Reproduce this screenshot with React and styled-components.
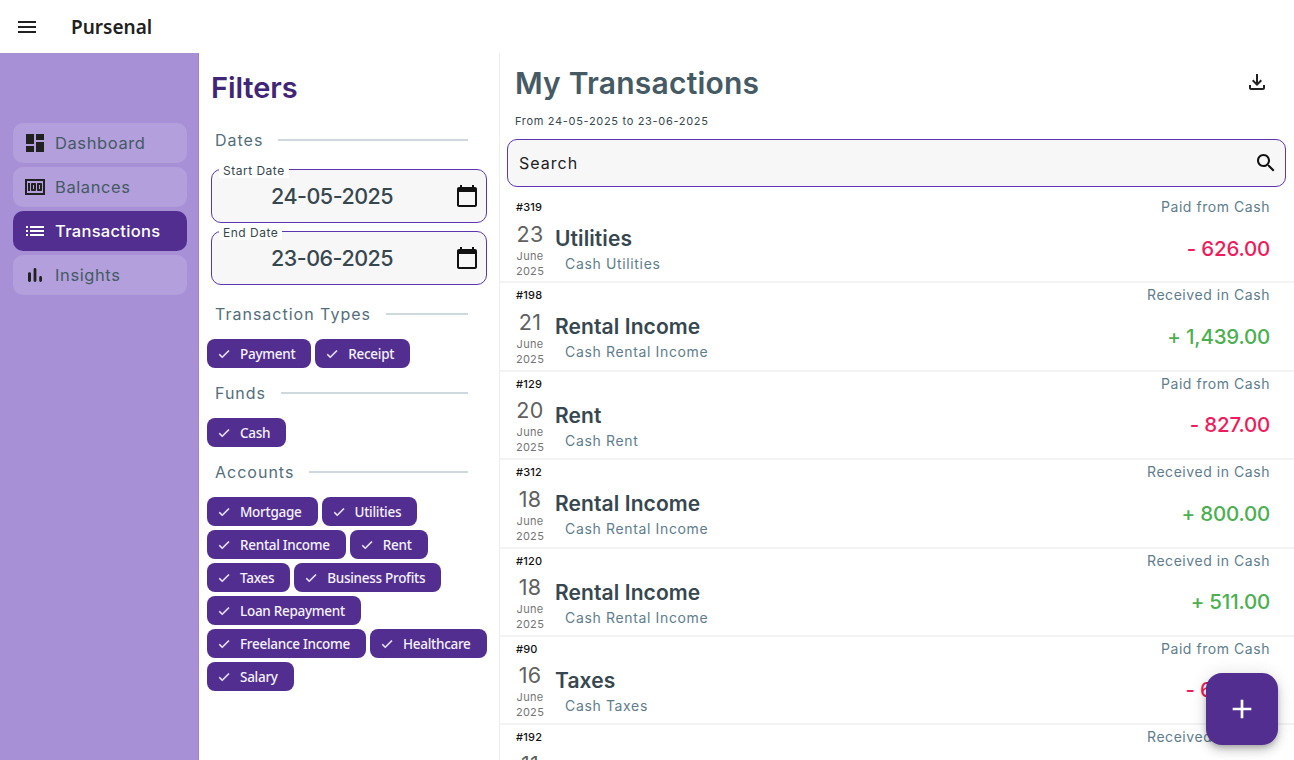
import React from "react";
import styled, { createGlobalStyle } from "styled-components";

const PURPLE = "#522e90";
const HEADING_FONT = `Inter, "Liberation Sans", sans-serif`;
const CHIP_FONT = `"Noto Sans", "Open Sans", sans-serif`;

const ICONS = {
  menu: "M3 18h18v-2H3zm0-5h18v-2H3zm0-7v2h18V6z",
  dashboard: "M3 13h8V3H3zm0 8h8v-6H3zm10 0h8V11h-8zm0-18v6h8V3z",
  money:
    "M5 8h2v8H5zm7 0H9c-.55 0-1 .45-1 1v6c0 .55.45 1 1 1h3c.55 0 1-.45 1-1V9c0-.55-.45-1-1-1m-1 6h-1v-4h1zm7-6h-3c-.55 0-1 .45-1 1v6c0 .55.45 1 1 1h3c.55 0 1-.45 1-1V9c0-.55-.45-1-1-1m-1 6h-1v-4h1zM2 4v16h20V4zm2 14V6h16v12z",
  list: "M3 13h2v-2H3zm0 4h2v-2H3zm0-8h2V7H3zm4 4h14v-2H7zm0 4h14v-2H7zM7 7v2h14V7z",
  bars: "M6.4 9.2h.2c.77 0 1.4.63 1.4 1.4v7c0 .77-.63 1.4-1.4 1.4h-.2c-.77 0-1.4-.63-1.4-1.4v-7c0-.77.63-1.4 1.4-1.4M12 5c.77 0 1.4.63 1.4 1.4v11.2c0 .77-.63 1.4-1.4 1.4s-1.4-.63-1.4-1.4V6.4c0-.77.63-1.4 1.4-1.4m5.6 8c.77 0 1.4.63 1.4 1.4v3.2c0 .77-.63 1.4-1.4 1.4s-1.4-.63-1.4-1.4v-3.2c0-.77.63-1.4 1.4-1.4",
  calendar:
    "M20 3h-1V1h-2v2H7V1H5v2H4c-1.1 0-2 .9-2 2v16c0 1.1.9 2 2 2h16c1.1 0 2-.9 2-2V5c0-1.1-.9-2-2-2m0 18H4V8h16z",
  search:
    "M15.5 14h-.79l-.28-.27C15.41 12.59 16 11.11 16 9.5 16 5.91 13.09 3 9.5 3S3 5.91 3 9.5 5.91 16 9.5 16c1.61 0 3.09-.59 4.23-1.57l.27.28v.79l5 4.99L20.49 19zm-6 0C7.01 14 5 11.99 5 9.5S7.01 5 9.5 5 14 7.01 14 9.5 11.99 14 9.5 14",
  download:
    "M18 15v3H6v-3H4v3c0 1.1.9 2 2 2h12c1.1 0 2-.9 2-2v-3zm-1-4-1.41-1.41L13 12.17V4h-2v8.17L8.41 9.59 7 11l5 5z",
  check: "M9 16.17 4.83 12l-1.42 1.41L9 19 21 7l-1.41-1.41z",
  add: "M19 13h-6v6h-2v-6H5v-2h6V5h2v6h6z",
};

const NAV_ITEMS = [
  { label: "Dashboard", icon: "dashboard" },
  { label: "Balances", icon: "money" },
  { label: "Transactions", icon: "list", active: true },
  { label: "Insights", icon: "bars" },
];

const ACCOUNTS = [
  "Mortgage",
  "Utilities",
  "Rental Income",
  "Rent",
  "Taxes",
  "Business Profits",
  "Loan Repayment",
  "Freelance Income",
  "Healthcare",
  "Salary",
];

const TRANSACTIONS = [
  { id: 319, day: 23, title: "Utilities", sub: "Cash Utilities", note: "Paid from Cash", amount: "- 626.00" },
  { id: 198, day: 21, title: "Rental Income", sub: "Cash Rental Income", note: "Received in Cash", amount: "+ 1,439.00", income: true },
  { id: 129, day: 20, title: "Rent", sub: "Cash Rent", note: "Paid from Cash", amount: "- 827.00" },
  { id: 312, day: 18, title: "Rental Income", sub: "Cash Rental Income", note: "Received in Cash", amount: "+ 800.00", income: true },
  { id: 120, day: 18, title: "Rental Income", sub: "Cash Rental Income", note: "Received in Cash", amount: "+ 511.00", income: true },
  { id: 90, day: 16, title: "Taxes", sub: "Cash Taxes", note: "Paid from Cash", amount: "- 640.00" },
  { id: 192, day: 11, title: "Rental Income", sub: "Cash Rental Income", note: "Received in Cash", amount: "+ 950.00", income: true },
];

const GlobalStyle = createGlobalStyle`
  html, body {
    margin: 0;
    height: 100%;
    overflow: hidden;
    background: #fff;
    font-family: ${HEADING_FONT};
  }
  #root { height: 100%; }
  * { box-sizing: border-box; }
`;

const Icon = ({ name, size = 24, color = "currentColor", stroke }) => (
  <svg
    width={size}
    height={size}
    viewBox="0 0 24 24"
    fill={color}
    stroke={stroke ? color : "none"}
    strokeWidth={stroke}
    style={{ flexShrink: 0, display: "block" }}
  >
    <path d={ICONS[name]} />
  </svg>
);

const Page = styled.div`
  height: 760px;
  display: flex;
  flex-direction: column;
  position: relative;
  overflow: hidden;
`;

const Header = styled.header`
  height: 53px;
  flex-shrink: 0;
  display: flex;
  align-items: center;
  padding-left: 15px;
  color: #212121;
`;

const Brand = styled.div`
  margin-left: 32px;
  font-family: ${CHIP_FONT};
  font-size: 19px;
  font-weight: 600;
`;

const Body = styled.div`
  flex: 1;
  display: flex;
  min-height: 0;
`;

const Sidebar = styled.nav`
  width: 199px;
  flex-shrink: 0;
  background: #a890d6;
  border-right: 1px solid #9a82c9;
  padding: 70px 11px 0 13px;
  display: flex;
  flex-direction: column;
  gap: 4px;
`;

const NavItem = styled.div`
  height: 40px;
  border-radius: 10px;
  display: flex;
  align-items: center;
  gap: 8px;
  padding-left: 10px;
  font-size: 16.5px;
  letter-spacing: ${(p) => (p.$active ? "0.3px" : "0.6px")};
  font-weight: ${(p) => (p.$active ? 500 : 400)};
  background: ${(p) => (p.$active ? PURPLE : "#b29fdb")};
  color: ${(p) => (p.$active ? "#fff" : "#455a64")};
`;

const NavIcon = styled.span`
  color: ${(p) => (p.$active ? "#fff" : "#212121")};
  display: block;
`;

const FilterColumn = styled.aside`
  width: 301px;
  flex-shrink: 0;
  border-right: 1px solid #eeeeee;
  padding: 15px 11px 0 8px;
`;

const FilterTitle = styled.h2`
  margin: 0 0 0 4px;
  height: 40px;
  line-height: 40px;
  font-size: 29px;
  font-weight: 600;
  letter-spacing: -0.1px;
  color: #412576;
`;

const SectionHead = styled.div`
  display: flex;
  align-items: center;
  gap: 15px;
  height: 24px;
  margin: ${(p) => p.$margin};
  padding: 0 20px 0 8px;
  font-size: 16px;
  letter-spacing: 1px;
  color: #546e7a;
  white-space: nowrap;

  &::after {
    content: "";
    flex: 1;
    height: 2px;
    background: #cfd8dc;
  }
`;

const DateField = styled.div`
  position: relative;
  margin: 0 0 8px 4px;
  width: 276px;
  height: 54px;
  border: 1px solid #5e35b1;
  border-radius: 10px;
  background: #f7f7f7;
  display: flex;
  align-items: center;
  padding: 0 7px 0 59px;
  font-size: 21.5px;
  font-weight: 500;
  letter-spacing: -0.5px;
  color: #37474f;
`;

const DateValue = styled.span`
  flex: 1;
`;

const FloatLabel = styled.span`
  position: absolute;
  left: 7px;
  top: -6px;
  padding: 0 4px;
  background: #fff;
  font-size: 12px;
  line-height: 14px;
  font-weight: 400;
  letter-spacing: 0.5px;
  color: #37474f;
`;

const ChipGroup = styled.div`
  display: flex;
  flex-wrap: wrap;
  gap: 4px;
`;

const ChipBox = styled.div`
  height: 29px;
  display: flex;
  align-items: center;
  padding: 0 16px 0 10px;
  border-radius: 8px;
  background: ${PURPLE};
  color: #f5f2fb;
  font-family: ${CHIP_FONT};
  font-size: 13.5px;
  font-weight: 500;
  letter-spacing: -0.28px;
  gap: 9px;
`;

const Main = styled.main`
  flex: 1;
  min-width: 0;
  overflow: hidden;
`;

const TitleRow = styled.div`
  height: 57px;
  padding: 11px 25px 0 15px;
  display: flex;
  align-items: flex-start;
  justify-content: space-between;
`;

const PageTitle = styled.h1`
  margin: 0;
  font-size: 30px;
  line-height: 38px;
  font-weight: 600;
  letter-spacing: 0.2px;
  color: #455a64;
`;

const DownloadIcon = styled.span`
  display: block;
  margin-top: 6px;
  color: #212121;
`;

const RangeText = styled.div`
  height: 29px;
  padding-left: 15px;
  font-size: 11px;
  line-height: 22px;
  letter-spacing: 0.68px;
  color: #37474f;
`;

const SearchBar = styled.div`
  margin: 0 8px 0 7px;
  height: 48px;
  border: 1px solid #5e35b1;
  border-radius: 10px;
  background: #f7f7f7;
  display: flex;
  align-items: center;
  justify-content: space-between;
  padding: 0 7px 0 11px;
  font-size: 16px;
  letter-spacing: 1px;
  color: #212121;
`;

const TxList = styled.div`
  margin-top: 8px;
`;

const TxRow = styled.article`
  height: 88.4px;
  border-bottom: 2px solid #f3f3f3;
  padding-right: 24px;
`;

const TxTop = styled.div`
  display: flex;
  justify-content: space-between;
  align-items: center;
  height: 24px;
  padding-left: 16px;
`;

const TxId = styled.span`
  font-size: 11px;
  font-weight: 500;
  letter-spacing: 0.2px;
  color: #111;
`;

const TxNote = styled.span`
  font-size: 14px;
  letter-spacing: 0.55px;
  padding-bottom: 1px;
  color: #607d8b;
`;

const TxBody = styled.div`
  display: flex;
  align-items: center;
  height: 62px;
`;

const DateCol = styled.div`
  width: 46px;
  margin: -2px 2px 0 7px;
  text-align: center;
  color: #757575;
  font-size: 11px;
  line-height: 15px;
  letter-spacing: 0.3px;
`;

const DayNum = styled.div`
  font-size: 21.5px;
  line-height: 28px;
  margin-bottom: 1px;
  color: #616161;
`;

const TxText = styled.div`
  flex: 1;
  margin-top: 2px;
`;

const TxTitle = styled.div`
  font-size: 21px;
  line-height: 26px;
  font-weight: 600;
  letter-spacing: 0.1px;
  color: #37474f;
`;

const TxSub = styled.div`
  padding-left: 10px;
  font-size: 14px;
  line-height: 24px;
  letter-spacing: 0.65px;
  color: #607d8b;
`;

const TxAmount = styled.div`
  font-size: 20.5px;
  font-weight: 500;
  letter-spacing: -0.2px;
  margin-top: -4px;
  color: ${(p) => (p.$income ? "#4caf50" : "#f01b5c")};
`;

const Fab = styled.button`
  position: absolute;
  right: 16px;
  bottom: 15px;
  width: 72px;
  height: 72px;
  border: 0;
  border-radius: 16px;
  background: ${PURPLE};
  color: #fff;
  display: flex;
  align-items: center;
  justify-content: center;
  box-shadow: 0 3px 5px -1px rgba(0, 0, 0, 0.2), 0 6px 10px 0 rgba(0, 0, 0, 0.14), 0 1px 18px 0 rgba(0, 0, 0, 0.12);
`;

const Chip = ({ label }) => (
  <ChipBox>
    <Icon name="check" size={14} stroke={0.8} />
    <span>{label}</span>
  </ChipBox>
);

const Transaction = ({ tx }) => (
  <TxRow>
    <TxTop>
      <TxId>#{tx.id}</TxId>
      <TxNote>{tx.note}</TxNote>
    </TxTop>
    <TxBody>
      <DateCol>
        <DayNum>{tx.day}</DayNum>
        <div>June</div>
        <div>2025</div>
      </DateCol>
      <TxText>
        <TxTitle>{tx.title}</TxTitle>
        <TxSub>{tx.sub}</TxSub>
      </TxText>
      <TxAmount $income={tx.income}>{tx.amount}</TxAmount>
    </TxBody>
  </TxRow>
);

const App = () => {
  return (
    <Page>
      <GlobalStyle />
      <Header>
        <Icon name="menu" />
        <Brand>Pursenal</Brand>
      </Header>
      <Body>
        <Sidebar>
          {NAV_ITEMS.map((item) => (
            <NavItem key={item.label} $active={item.active}>
              <NavIcon $active={item.active}>
                <Icon name={item.icon} />
              </NavIcon>
              {item.label}
            </NavItem>
          ))}
        </Sidebar>
        <FilterColumn>
          <FilterTitle>Filters</FilterTitle>
          <SectionHead $margin="20px 0 17px">Dates</SectionHead>
          <DateField>
            <FloatLabel>Start Date</FloatLabel>
            <DateValue>24-05-2025</DateValue>
            <Icon name="calendar" color="#111" />
          </DateField>
          <DateField>
            <FloatLabel>End Date</FloatLabel>
            <DateValue>23-06-2025</DateValue>
            <Icon name="calendar" color="#111" />
          </DateField>
          <SectionHead $margin="17px 0 13px">Transaction Types</SectionHead>
          <ChipGroup>
            <Chip label="Payment" />
            <Chip label="Receipt" />
          </ChipGroup>
          <SectionHead $margin="13px 0 13px">Funds</SectionHead>
          <ChipGroup>
            <Chip label="Cash" />
          </ChipGroup>
          <SectionHead $margin="13px 0 13px">Accounts</SectionHead>
          <ChipGroup>
            {ACCOUNTS.map((name) => (
              <Chip key={name} label={name} />
            ))}
          </ChipGroup>
        </FilterColumn>
        <Main>
          <TitleRow>
            <PageTitle>My Transactions</PageTitle>
            <DownloadIcon>
              <Icon name="download" />
            </DownloadIcon>
          </TitleRow>
          <RangeText>From 24-05-2025 to 23-06-2025</RangeText>
          <SearchBar>
            Search
            <Icon name="search" color="#111" />
          </SearchBar>
          <TxList>
            {TRANSACTIONS.map((tx) => (
              <Transaction key={tx.id} tx={tx} />
            ))}
          </TxList>
        </Main>
      </Body>
      <Fab aria-label="Add transaction">
        <Icon name="add" size={32} />
      </Fab>
    </Page>
  );
};

export default App;
